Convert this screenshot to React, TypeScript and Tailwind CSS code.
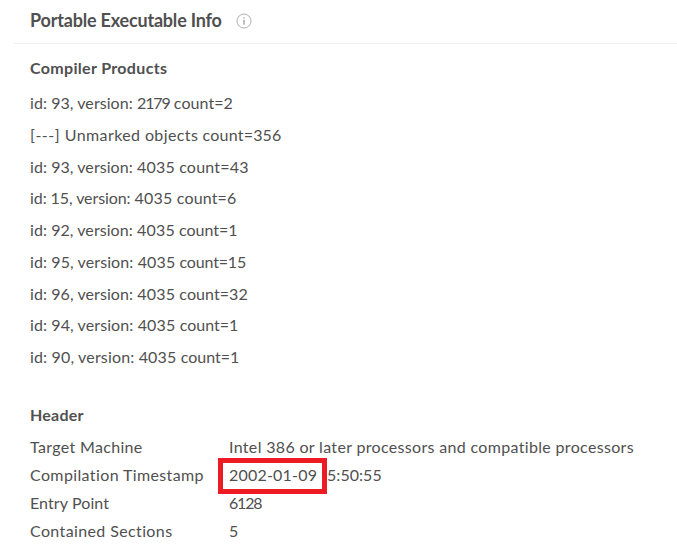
const compilerProducts = [
  { id: 'id: 93, version: ', version: '2179', count: ' count=2', idTracking: 'tracking-[0.06px]', versionTracking: 'tracking-[-1.1px]', countTracking: 'tracking-[0.06px]' },
  { id: '[---] ', version: 'Unmarked objects', count: ' count=356', idTracking: 'tracking-[0.5px]', versionTracking: 'tracking-[0.4px]', countTracking: 'tracking-[0.2px]' },
  { id: 'id: 93, version: ', version: '4035', count: ' count=43', idTracking: 'tracking-[0.06px]', versionTracking: 'tracking-[0.2px]', countTracking: 'tracking-[0.2px]' },
  { id: 'id: 15, version: ', version: '4035', count: ' count=6', idTracking: 'tracking-[-0.08px]', versionTracking: 'tracking-[0.2px]', countTracking: 'tracking-[0.16px]' },
  { id: 'id: 92, version: ', version: '4035', count: ' count=1', idTracking: 'tracking-[0.06px]', versionTracking: 'tracking-[0.2px]', countTracking: 'tracking-[0px]' },
  { id: 'id: 95, version: ', version: '4035', count: ' count=15', idTracking: 'tracking-[0.1px]', versionTracking: 'tracking-[0.2px]', countTracking: 'tracking-[-0.16px]' },
  { id: 'id: 96, version: ', version: '4035', count: ' count=32', idTracking: 'tracking-[0.08px]', versionTracking: 'tracking-[0.2px]', countTracking: 'tracking-[0.06px]' },
  { id: 'id: 94, version: ', version: '4035', count: ' count=1', idTracking: 'tracking-[0.1px]', versionTracking: 'tracking-[0.2px]', countTracking: 'tracking-[0px]' },
  { id: 'id: 90, version: ', version: '4035', count: ' count=1', idTracking: 'tracking-[0.16px]', versionTracking: 'tracking-[0.2px]', countTracking: 'tracking-[0px]' },
];

function InfoIcon() {
  return (
    <svg className="ml-[14px] mt-[2px] h-4 w-4" viewBox="0 0 16 16" fill="none" stroke="#a6a6a6">
      <circle cx="8" cy="8" r="7" strokeWidth="0.9" />
      <path d="M8 4.2v1.4M8 6.8V11.8" strokeWidth="1.4" />
    </svg>
  );
}

export default function App() {
  return (
    <main className="h-[556px] w-[677px] overflow-hidden whitespace-nowrap bg-white font-['Lato',sans-serif] text-[16px] text-[#505050]">
      <header className="ml-[14px] flex h-[44px] items-center border-b border-[#efefef] pb-[3px] pl-4">
        <h1 className="text-[18px] font-bold tracking-[-0.19px]">Portable Executable Info</h1>
        <InfoIcon />
      </header>
      <section className="pl-[30px] pt-[12px]">
        <h2 className="h-[24px] font-bold leading-[24px] tracking-[0.33px]">Compiler Products</h2>
        <ul className="mt-[7.4px]">
          {compilerProducts.map((p) => (
            <li key={p.id + p.count} className="h-[31.7px] whitespace-pre leading-[31.7px]">
              <span className={p.idTracking}>{p.id}</span>
              <span className={p.versionTracking}>{p.version}</span>
              <span className={p.countTracking}>{p.count}</span>
            </li>
          ))}
        </ul>
      </section>
      <section className="pl-[30px] pt-[30.6px]">
        <h2 className="h-[24px] font-bold leading-[24px] tracking-[0.25px]">Header</h2>
        <dl className="mt-[6px] grid auto-rows-[27.8px] grid-cols-[199px_1fr] leading-[27.8px]">
          <dt className="tracking-[0.33px]">Target Machine</dt>
          <dd className="tracking-[0.33px]">Intel 386 or later processors and compatible processors</dd>
          <dt className="tracking-[0.38px]">Compilation Timestamp</dt>
          <dd className="flex">
            <span className="relative w-[98px] tracking-[0.2px]">
              2002-01-09
              <span className="absolute -left-[11px] -top-[3px] h-[36px] w-[109px] border-[5px] border-[#ed1c24]" />
            </span>
            <span className="tracking-[0.05px]">5:50:55</span>
          </dd>
          <dt className="tracking-[0.1px]">Entry Point</dt>
          <dd className="tracking-[-1.2px]">6128</dd>
          <dt className="tracking-[0.38px]">Contained Sections</dt>
          <dd>5</dd>
        </dl>
      </section>
    </main>
  );
}
